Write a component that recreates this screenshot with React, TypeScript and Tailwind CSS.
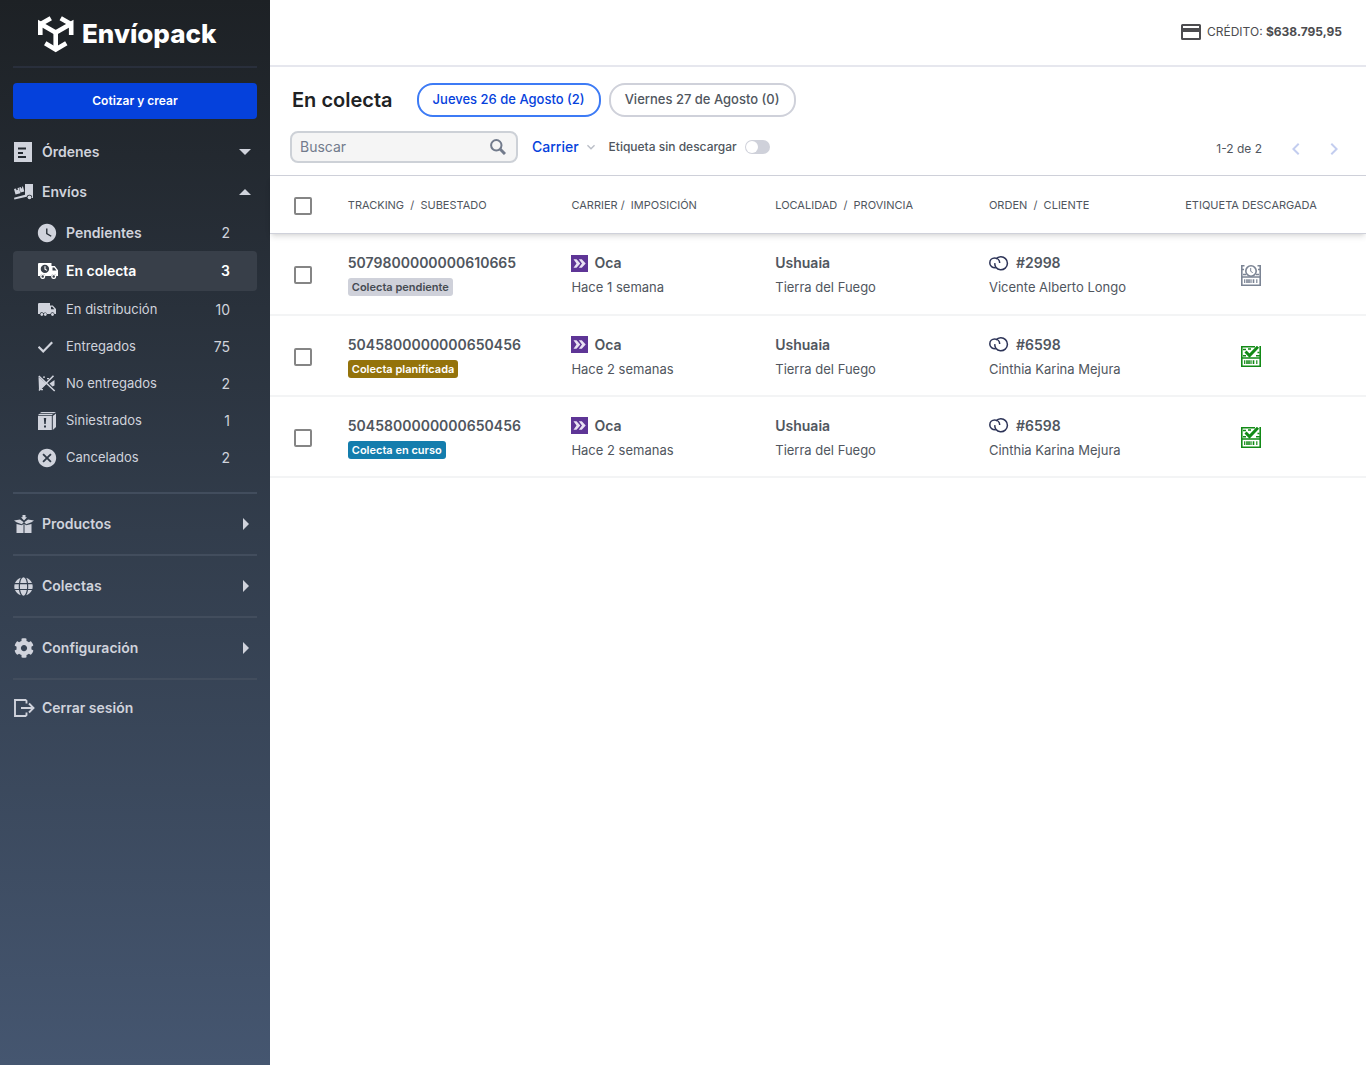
import React from "react";
import { FaCog, FaGlobe } from "react-icons/fa";
import { MdCancel, MdChevronLeft, MdChevronRight, MdExpandMore, MdWatchLater } from "react-icons/md";

type NavItem = {
  label: string;
  count: number;
  icon: React.ReactNode;
  active?: boolean;
  bold?: boolean;
};

type Shipment = {
  tracking: string;
  status: string;
  statusClass: string;
  age: string;
  order: string;
  customer: string;
  downloaded: boolean;
};

const LogoMark = () => (
  <svg width="36" height="38" viewBox="0 0 36 38" fill="none" stroke="currentColor" strokeWidth="4.6">
    <path d="M2.300 20V8.800L17.700 17.500L33.200 8.800V20" />
    <path d="M2.300 9.300L12.800 3.200M33.200 9.300L22.700 3.200" />
    <path d="M17.700 16V35" />
    <path d="M7.200 28.300L17.700 34.500L28.300 28.300" />
  </svg>
);

const OrdersIcon = () => (
  <svg width="18" height="20" viewBox="0 0 18 20" fill="currentColor">
    <path fillRule="evenodd" d="M0 0h18v20H0zM4 5.500v2h8v-2zM4 10v2h5v-2zM4 14v2h8v-2z" />
  </svg>
);

const ShippingIcon = () => (
  <svg width="19" height="16" viewBox="0 0 19 16" fill="currentColor">
    <path d="M11 0h8v14h-1a2.700 2.700 0 0 0-5.300-1.200L.4 15.500 0 13.800l11-3z" />
    <path d="M0 5l2-.5.500 1.700 1.400-.4-.4-1.700L4.900 3.700 6.400 9.300 1.500 10.600zM5.200 3.500l1.600-.5.400 1.400 1-.3-.4-1.400 1.200-.3 1.300 5-3.800 1z" />
    <circle cx="15.500" cy="13.300" r="1.900" />
  </svg>
);

const PickupIcon = () => (
  <svg width="21" height="16" viewBox="0 0 21 16" fill="currentColor">
    <path
      fillRule="evenodd"
      d="M1 0h12.500v3h3.300L20 7.300V13h-1.700a2.700 2.700 0 0 0-5.200 0H7.300a2.700 2.700 0 0 0-5.200 0H0V1a1 1 0 0 1 1-1zM6.900 1.700a4.200 4.200 0 1 0 0 8.400 4.200 4.200 0 0 0 0-8.400zM14.500 4.500v3h4l-2.300-3z"
    />
    <path d="M7 3.300v2.800l2 1.300" fill="none" stroke="currentColor" strokeWidth="1.100" />
    <circle cx="4.700" cy="13.500" r="1.900" fill="none" stroke="currentColor" strokeWidth="1.300" />
    <circle cx="15.700" cy="13.500" r="1.900" fill="none" stroke="currentColor" strokeWidth="1.300" />
  </svg>
);

const TruckIcon = () => (
  <svg width="18" height="13" viewBox="0 0 18 13" fill="currentColor">
    <path
      fillRule="evenodd"
      d="M.8 0H12v2.500h2.800L18 6v5h-1.500a2.100 2.100 0 0 0-4.100 0H9a2 2 0 0 0-3.500-.7A2 2 0 0 0 1.800 11H0V.8zM13 3.700v2.500h3.300l-2-2.500z"
    />
    <circle cx="3.800" cy="11.500" r="1.400" />
    <circle cx="7.300" cy="11.500" r="1.400" />
    <circle cx="14.500" cy="11.500" r="1.400" />
  </svg>
);

const CheckIcon = () => (
  <svg width="16" height="12" viewBox="0 0 16 12" fill="none" stroke="currentColor" strokeWidth="2.200">
    <path d="M.5 5.800L5.200 10.400L14.200 1.200" />
  </svg>
);

const NotDeliveredIcon = () => (
  <svg width="18" height="17" viewBox="0 0 18 17" fill="currentColor">
    <path d="M.5 2L8.500 8.700 1 15zM11.500 8.500L16.500 5V10.500L14.500 11.500zM5 1.500h2v1.300H5zM9 3h2v1.300H9zM3 14h2v1.200H3z" />
    <path d="M.8 1L16.700 16M15.500 .8L1 15.500" fill="none" stroke="currentColor" strokeWidth="1.600" />
  </svg>
);

const DamagedIcon = () => (
  <svg width="18" height="18" viewBox="0 0 18 18" fill="currentColor">
    <path d="M3.500 0H18L16 1.300H1.500zM1 2h14l-1.300 1.200H0zM14.800 4L18 1.500V15l-3.200 3z" />
    <path fillRule="evenodd" d="M0 4h13.800v14H0zM5.800 6l.5 6h1.400l.5-6zM6 13.500v2h2v-2z" />
  </svg>
);

const ProductsIcon = () => (
  <svg width="20" height="18" viewBox="0 0 20 18" fill="currentColor">
    <path d="M8.500 0h3v2.200H13L10 5.500 7 2.200h1.500zM0 5.500l6-1 3.700 2.800-1.900 2-5.300-2zM20 5.500l-6-1-3.700 2.800 1.900 2 5.300-2zM2.500 9l5.500 1.200 1.500-1.500V18h-7zM17.500 9L12 10.200l-1.500-1.500V18h7z" />
  </svg>
);

const LogoutIcon = () => (
  <svg width="21" height="18" viewBox="0 0 21 18" fill="none" stroke="currentColor" strokeWidth="1.900">
    <path d="M12.500 4.500V1.900L11.500 1H1v16h10.500l1-.9v-2.600M7 9h12.500M15 4.500L19.500 9L15 13.500" />
  </svg>
);

const CreditIcon = () => (
  <svg width="20" height="16" viewBox="0 0 20 16" fill="currentColor">
    <path fillRule="evenodd" d="M1.500 0h17A1.500 1.500 0 0 1 20 1.500v13a1.500 1.500 0 0 1-1.500 1.500h-17A1.500 1.500 0 0 1 0 14.500v-13A1.500 1.500 0 0 1 1.500 0zM2 2v2h16V2zM2 8v6h16V8z" />
  </svg>
);

const SearchIcon = () => (
  <svg width="16" height="16" viewBox="0 0 16 16" fill="none" stroke="currentColor">
    <circle cx="6.300" cy="6.300" r="5.200" strokeWidth="2" />
    <path d="M10.300 10.300L15 15" strokeWidth="3" />
  </svg>
);

const CarrierLogo = () => (
  <svg width="17" height="17" viewBox="0 0 17 17">
    <path fill="#5e3596" d="M0 0h17v17H0z" />
    <path d="M2.500 4.300h3L9.300 8.500l-3.800 4.200h-3L5.500 8.500zM7.800 4.300h3L14.700 8.500l-3.900 4.200h-3L11 8.500z" fill="#e9e2f3" />
  </svg>
);

const StoreLogo = () => (
  <svg width="20" height="15" viewBox="0 0 20 15" fill="none" stroke="#2c3357" strokeWidth="1.500">
    <path d="M6.800 11.300A6.500 6.500 0 1 0 7 3" />
    <path d="M6.800 11.700C3.500 12 .8 10 .8 6.900C.8 4 3 2 5.700 2C8.700 2 10.700 4.100 10.700 7" />
    <path d="M6.800 11.300C5.900 10 5.600 8.600 5.900 7.200" />
  </svg>
);

const LabelIcon = ({ done }: { done: boolean }) => (
  <svg
    width="20"
    height="21"
    viewBox="0 0 20 21"
    fill="none"
    stroke="currentColor"
    strokeWidth="1.600"
    role="img"
    aria-label={done ? "Descargada" : "Sin descargar"}
    className={done ? "text-[#128a16]" : "text-[#7b8494]"}
  >
    <path d="M.8 0v20.200h18.400V0M0 12h20" />
    <path d="M3.700 18v-3.800M10 18v-3.800M15.800 18v-3.800" strokeWidth="1.200" />
    <path d="M6 18v-3.800M8 18v-3.800M12.500 18v-3.800" strokeWidth="1.600" />
    {done ? (
      <>
        <path d="M0 .8h14M2 3.500h3M7 3h3M2 9.800h3M15 9.800h4M16.500 6.500h2" strokeWidth="1.400" />
        <path d="M4.500 5.500L8.500 9.500L17 .8" strokeWidth="3" />
      </>
    ) : (
      <>
        <path d="M0 .8h3.500M16.500 .8H20M1 4.500h2M17 4.500h2M2 9.500h3M15 9.500h3" />
        <circle cx="10" cy="6" r="5.200" />
        <path d="M9.700 3v3.300l2 1.300" strokeWidth="1" />
      </>
    )}
  </svg>
);

const shippingItems: NavItem[] = [
  { label: "Pendientes", count: 2, icon: <MdWatchLater size={22} className="-ml-0.5" />, bold: true },
  { label: "En colecta", count: 3, icon: <PickupIcon />, active: true },
  { label: "En distribución", count: 10, icon: <TruckIcon /> },
  { label: "Entregados", count: 75, icon: <CheckIcon /> },
  { label: "No entregados", count: 2, icon: <NotDeliveredIcon /> },
  { label: "Siniestrados", count: 1, icon: <DamagedIcon /> },
  { label: "Cancelados", count: 2, icon: <MdCancel size={22} className="-ml-0.5" /> },
];

const sections = [
  { label: "Productos", icon: <ProductsIcon /> },
  { label: "Colectas", icon: <FaGlobe size={19} /> },
  { label: "Configuración", icon: <FaCog size={20} /> },
];

const shipments: Shipment[] = [
  {
    tracking: "5079800000000610665",
    status: "Colecta pendiente",
    statusClass: "bg-[#cfd1da] text-[#454a52]",
    age: "Hace 1 semana",
    order: "#2998",
    customer: "Vicente Alberto Longo",
    downloaded: false,
  },
  {
    tracking: "5045800000000650456",
    status: "Colecta planificada",
    statusClass: "bg-[#94730b] text-white",
    age: "Hace 2 semanas",
    order: "#6598",
    customer: "Cinthia Karina Mejura",
    downloaded: true,
  },
  {
    tracking: "5045800000000650456",
    status: "Colecta en curso",
    statusClass: "bg-[#147dad] text-white",
    age: "Hace 2 semanas",
    order: "#6598",
    customer: "Cinthia Karina Mejura",
    downloaded: true,
  },
];

const Checkbox = ({ label }: { label: string }) => (
  <input
    type="checkbox"
    aria-label={label}
    className="block size-[18px] appearance-none rounded-xs border-2 border-[#858585] bg-white checked:bg-[#0541dc]"
  />
);

function Sidebar() {
  return (
    <aside className="flex w-[270px] shrink-0 flex-col bg-linear-to-b from-[#1d2125] via-[#323d4c] to-[#455670] px-[13px] text-sm text-[#d0d3dc]">
      <div className="flex h-[68px] items-center gap-2 border-b-2 border-[#292f3c] pt-0.5 pl-[25px] text-white">
        <LogoMark />
        <span className="text-[26px] font-extrabold">Envíopack</span>
      </div>

      <button className="mt-[15px] h-9 rounded-sm bg-[#0541dc] text-xs font-semibold text-white">Cotizar y crear</button>

      <nav className="mt-[13px] flex flex-col">
        <button className="flex h-10 items-center pr-1.5 pl-px font-semibold">
          <span className="w-7">
            <OrdersIcon />
          </span>
          Órdenes
          <svg className="ml-auto" width="12" height="6" viewBox="0 0 12 6" fill="currentColor">
            <path d="M0 0h12L6 6z" />
          </svg>
        </button>
        <button className="flex h-10 items-center pr-1.5 pl-px font-semibold" aria-expanded="true">
          <span className="w-7">
            <ShippingIcon />
          </span>
          Envíos
          <svg className="ml-auto" width="12" height="6" viewBox="0 0 12 6" fill="currentColor">
            <path d="M0 6h12L6 0z" />
          </svg>
        </button>

        <ul className="mt-0.5">
          {shippingItems.map((item) => (
            <li key={item.label}>
              <a
                href="#"
                className={
                  item.active
                    ? "flex h-10 items-center rounded-sm bg-[#383f49] pr-[27px] pl-[25px] font-semibold text-white"
                    : "flex h-[37px] items-center pr-[27px] pl-[25px]"
                }
              >
                <span className="w-7">{item.icon}</span>
                <span className={item.bold || item.active ? "font-semibold" : "text-[13px]"}>{item.label}</span>
                <span className="ml-auto">{item.count}</span>
              </a>
            </li>
          ))}
        </ul>

        <div className="mt-4">
          {sections.map((section) => (
            <button
              key={section.label}
              className="flex h-[62px] w-full items-center border-t-2 border-[#424d5d] pr-2 pl-px font-semibold"
            >
              <span className="w-7">{section.icon}</span>
              {section.label}
              <svg className="ml-auto" width="6" height="12" viewBox="0 0 6 12" fill="currentColor">
                <path d="M0 0v12l6-6z" />
              </svg>
            </button>
          ))}
        </div>
        <a href="#" className="flex h-[58px] items-center border-t-2 border-[#424d5d] pl-px font-semibold">
          <span className="w-7">
            <LogoutIcon />
          </span>
          Cerrar sesión
        </a>
      </nav>
    </aside>
  );
}

function Toolbar() {
  return (
    <div className="border-b border-[#cfd1da] px-5 pt-4 pb-3">
      <div className="flex items-center gap-2">
        <h1 className="mr-4 pl-0.5 text-xl font-semibold text-[#202224]">En colecta</h1>
        <button className="h-[34px] rounded-2xl border-2 border-[#3d7bf5] px-3.5 text-[13px] font-medium text-[#0541dc]">
          Jueves 26 de Agosto (2)
        </button>
        <button className="h-[34px] rounded-2xl border-2 border-[#cfd1da] px-3.5 text-[13px] font-medium text-[#50565e]">
          Viernes 27 de Agosto (0)
        </button>
      </div>

      <div className="mt-3.5 flex items-center">
        <label className="flex h-8 w-[228px] items-center rounded-lg border-2 border-[#cdd1d7] bg-[#f5f5f5] pr-2.5 pl-2 text-[#727b8c]">
          <input
            type="text"
            aria-label="Buscar"
            placeholder="Buscar"
            className="min-w-0 flex-1 bg-transparent text-sm outline-none placeholder:text-[#727b8c]"
          />
          <SearchIcon />
        </label>
        <button className="ml-3.5 flex items-center gap-1 text-sm font-medium text-[#0541dc]">
          Carrier
          <MdExpandMore size={16} className="text-[#b9bdc6]" />
        </button>
        <label htmlFor="no-label" className="ml-2.5 text-xs font-medium text-[#50565e]">
          Etiqueta sin descargar
        </label>
        <input
          id="no-label"
          type="checkbox"
          role="switch"
          className="ml-2 flex h-3.5 w-[25px] appearance-none items-center rounded-full bg-[#cfd1da] px-px before:size-3 before:rounded-full before:bg-white checked:justify-end checked:bg-[#0541dc]"
        />
        <div className="ml-auto flex items-center pt-1 text-xs text-[#50565e]">
          1-2 de 2
          <button aria-label="Anterior" className="ml-[22px] text-[#c3cdef]">
            <MdChevronLeft size={24} />
          </button>
          <button aria-label="Siguiente" className="ml-3.5 text-[#c3cdef]">
            <MdChevronRight size={24} />
          </button>
        </div>
      </div>
    </div>
  );
}

function ShipmentsTable() {
  return (
    <table className="w-full table-fixed border-separate border-spacing-0 text-left text-[13px] text-[#50565e]">
      <thead className="shadow-md">
        <tr className="h-[58px] text-[11px] [&>th]:border-b [&>th]:border-[#cfd1da] [&>th]:pt-0.5 [&>th]:font-normal">
          <th className="w-[7.1%] pl-6">
            <Checkbox label="Seleccionar todos" />
          </th>
          <th className="w-[20.4%]">TRACKING&nbsp; /&nbsp; SUBESTADO</th>
          <th className="w-[18.6%]">CARRIER /&nbsp; IMPOSICIÓN</th>
          <th className="w-[19.5%]">LOCALIDAD&nbsp; /&nbsp; PROVINCIA</th>
          <th className="w-[17.8%]">ORDEN&nbsp; /&nbsp; CLIENTE</th>
          <th className="pr-12 text-center whitespace-nowrap">ETIQUETA DESCARGADA</th>
        </tr>
      </thead>
      <tbody>
        {shipments.map((s, i) => (
          <tr key={i} className="h-[81px] first:h-[82px] [&>td]:border-b-2 [&>td]:border-[#f3f4f5] [&>td]:pt-0.5">
            <td className="pl-6">
              <Checkbox label={`Seleccionar ${s.tracking}`} />
            </td>
            <td>
              <div className="text-sm leading-6 font-semibold">{s.tracking}</div>
              <div className="flex h-6 items-center">
                <span className={`rounded-[3px] px-1 text-[11px] leading-[18px] font-semibold ${s.statusClass}`}>
                  {s.status}
                </span>
              </div>
            </td>
            <td>
              <div className="flex h-6 items-center gap-1.5 text-sm font-semibold">
                <CarrierLogo />
                Oca
              </div>
              <div className="leading-6">{s.age}</div>
            </td>
            <td>
              <div className="text-sm leading-6 font-semibold">Ushuaia</div>
              <div className="leading-6">Tierra del Fuego</div>
            </td>
            <td>
              <div className="flex h-6 items-center gap-[7px] text-sm font-semibold">
                <StoreLogo />
                {s.order}
              </div>
              <div className="leading-6">{s.customer}</div>
            </td>
            <td className="pr-12">
              <div className="flex justify-center">
                <LabelIcon done={s.downloaded} />
              </div>
            </td>
          </tr>
        ))}
      </tbody>
    </table>
  );
}

export default function App() {
  return (
    <div className="flex min-h-screen bg-white font-['Inter',sans-serif]">
      <Sidebar />
      <main className="min-w-0 flex-1">
        <header className="flex h-[67px] items-center justify-end gap-1.5 border-b-2 border-[#e6e7ee] pr-6 pb-px text-xs text-[#4c4c4f]">
          <CreditIcon />
          <span>
            CRÉDITO: <strong className="font-bold">$638.795,95</strong>
          </span>
        </header>
        <Toolbar />
        <ShipmentsTable />
      </main>
    </div>
  );
}
